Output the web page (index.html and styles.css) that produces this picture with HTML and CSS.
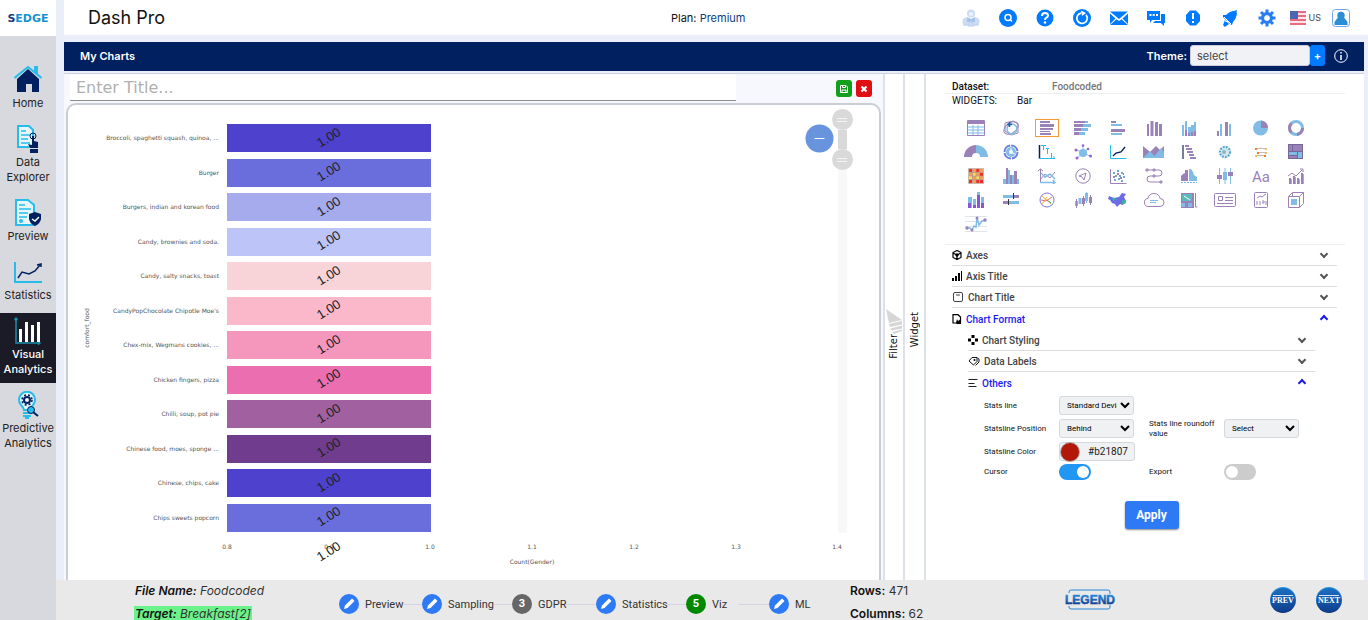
FILE: index.html
```html
<!DOCTYPE html>
<html lang="en">
<head>
<meta charset="utf-8">
<title>Dash Pro</title>
<link rel="stylesheet" href="styles.css">
</head>
<body>
<aside class="sidebar">
  <div class="logo"><span>S</span>EDGE</div>
  <nav class="nav">
    <a class="nav-item" href="#"><svg viewBox="0 0 28 28"><path d="M3 13h0L14 3l11 10v13h-7v-8h-6v8H3z" fill="#00205f"/><path d="M0.500 12 14 1l13.500 11" fill="none" stroke="#27bdea" stroke-width="2"/><path d="M20 0h4v9l-4-4z" fill="#27bdea"/></svg><span>Home</span></a>
    <a class="nav-item" href="#"><svg viewBox="0 0 28 28"><path d="M4 1h11l4 4v17H4z" fill="#e6f6fb" stroke="#27bdea" stroke-width="2"/><path d="M7 6h5M7 10h9M7 14h7M7 18h9" stroke="#27bdea" stroke-width="1.500"/><circle cx="19" cy="11" r="3" fill="none" stroke="#00205f"/><path d="M18 11h2v5l4 1v6h-8l-2-4 4 1zM16 24h8v4h-8z" fill="#00205f"/></svg><span>Data<br>Explorer</span></a>
    <a class="nav-item" href="#"><svg viewBox="0 0 28 28"><path d="M2 1h12l6 5v20H2z" fill="#e6f6fb" stroke="#27bdea" stroke-width="2"/><path d="M5 6h6M5 10h12M5 14h9M5 18h8" stroke="#27bdea" stroke-width="1.500"/><circle cx="7" cy="22" r="2" fill="#27bdea"/><path d="M21 13l6 2v5q-1 5-6 7-5-2-6-7v-5z" fill="#00205f"/><path d="M18 20l3 2 4-4" fill="none" stroke="#fff" stroke-width="1.500"/></svg><span>Preview</span></a>
    <a class="nav-item" href="#"><svg viewBox="0 0 28 28"><path d="M1 4v20h27" fill="none" stroke="#27bdea" stroke-width="2"/><path d="M4 20l4-6 7 2 6-3 5-6M23 7l4-1v3" fill="none" stroke="#00205f" stroke-width="1.500"/></svg><span>Statistics</span></a>
    <a class="nav-item active" href="#"><svg viewBox="0 0 28 28"><path d="M2 2v24h24M0.500 3L2 1l1.500 2M24 24.500l2 1.500-2 1.500" fill="none" stroke="#1c8fa8" stroke-width="1.500"/><path d="M5 12h3v13H5zM11 5h3v20h-3zM17 8h3v17h-3zM23 5h3v20h-3z" fill="#fff"/></svg><span>Visual<br>Analytics</span></a>
    <a class="nav-item" href="#"><svg viewBox="0 0 28 28"><path d="M10 19q0-2-3-5a8 8 0 1 1 12 0q-3 3-3 5z" fill="#e6f6fb" stroke="#27bdea" stroke-width="2"/><path d="M9 22h8M9 25h8M11 27h4" stroke="#27bdea" stroke-width="2"/><circle cx="13" cy="9" r="3" fill="none" stroke="#00205f" stroke-width="2"/><circle cx="13" cy="9" r="5" fill="none" stroke="#00205f" stroke-width="1.500" stroke-dasharray="2 2"/><circle cx="17" cy="19" r="3.500" fill="#27bdea" stroke="#00205f"/><path d="M19 21l5 4" stroke="#00205f" stroke-width="2"/></svg><span>Predictive<br>Analytics</span></a>
  </nav>
</aside>
<div class="page">
  <header class="topbar">
    <h1>Dash Pro</h1>
    <p class="plan">Plan: <span>Premium</span></p>
    <div class="tools">
      <button aria-label="Assistant"><svg viewBox="0 0 18 18" fill="#cbdcf3"><circle cx="9" cy="4.500" r="4"/><circle cx="4.500" cy="12.500" r="4"/><circle cx="13.500" cy="12.500" r="4"/><path d="M5 8l4 2 4-2v5H5z" fill="#a8c3ea"/><path d="M6 17l2-4h2l2 4zM1 16h5M12 16h5" stroke="#b9cfee"/><circle cx="9" cy="5" r="2" fill="#edf3fb"/></svg></button>
      <button aria-label="Search"><svg viewBox="0 0 18 18"><circle cx="9" cy="9" r="9" fill="#007bff"/><circle cx="9" cy="8.500" r="3" fill="none" stroke="#fff" stroke-width="1.500"/><path d="M11 10.500l2 2" stroke="#fff" stroke-width="1.500"/></svg></button>
      <button aria-label="Help"><svg viewBox="0 0 18 18"><circle cx="9" cy="9" r="8.500" fill="#007bff"/><path d="M6 7q0-3 3-3t3 2.500q0 1.500-1.500 2.200T9 11" fill="none" stroke="#fff" stroke-width="2"/><circle cx="9" cy="13.500" r="1.300" fill="#fff"/></svg></button>
      <button aria-label="Refresh"><svg viewBox="0 0 18 18"><circle cx="9" cy="9" r="9" fill="#007bff"/><path d="M8 4.100A5.200 5.200 0 1 0 13 5.800" fill="none" stroke="#fff" stroke-width="1.700"/><path d="M8 1.500l5 2.500-4 3z" fill="#fff"/></svg></button>
      <button aria-label="Mail"><svg viewBox="0 0 18 18"><path d="M0 2.500h18L9 10zM0 4.500l5.500 5L0 15zM18 4.500l-5.500 5L18 15zM6.500 10.300L9 12l2.500-1.700L18 16H0z" fill="#007bff"/></svg></button>
      <button aria-label="Messages"><svg viewBox="0 0 18 18"><path d="M0 2h13v9H5l-2 3v-3H0zM14 5h4v9h-1v3l-3-3H6l2-2h6z" fill="#007bff"/><path d="M2.500 6h2M5.700 6h2M9 6h2" stroke="#fff" stroke-width="2"/></svg></button>
      <button aria-label="Alerts"><svg viewBox="0 0 18 18"><path d="M6 1.500h6L16 6v6l-4 4.500H6L2 12V6z" fill="#007bff"/><path d="M9 4v6M9 12v2" stroke="#fff" stroke-width="2"/></svg></button>
      <button aria-label="Notifications"><svg viewBox="0 0 18 18"><path d="M16 1q-1 2 0 4-1 5-4 8l-1 3-2-1-7-7 0-2 3 0q4-4 8-4zM4 11l4 4-4 3-2-2z" fill="#007bff"/><path d="M3 8l7 7M4 12l4 1" stroke="#fff"/></svg></button>
      <button aria-label="Settings"><svg viewBox="0 0 18 18"><circle cx="9" cy="9" r="4.300" fill="none" stroke="#2a7df0" stroke-width="3.500"/><path d="M9 0.500v4M9 13.500v4M0.500 9h4M13.500 9h4M3 3l3 3M12 12l3 3M15 3l-3 3M6 12l-3 3" stroke="#2a7df0" stroke-width="3"/><circle cx="9" cy="9" r="2.700" fill="#fff"/></svg></button>
      <button class="lang" aria-label="Language"><svg viewBox="0 0 16 14"><path d="M0 0h16v14H0z" fill="#fbe4e8"/><path d="M0 1h16M0 5h16M0 9h16M0 13h16" stroke="#e86c80" stroke-width="2"/><path d="M0 0h8v8H0z" fill="#4d66b1"/></svg>US</button>
      <button aria-label="Account"><svg viewBox="0 0 18 18"><rect x="0.500" y="0.500" width="17" height="17" rx="3" fill="#fff" stroke="#6fa6ee"/><circle cx="9" cy="6.500" r="3.700" fill="#2b8dd6"/><path d="M2.500 16v-3l3-4h7l3 4v3z" fill="#2b8dd6"/></svg></button>
    </div>
  </header>
  <section class="titlebar">
    <h2>My Charts</h2>
    <div class="theme">
      <label for="theme">Theme:</label>
      <select id="theme"><option>select</option></select><button class="add">+</button>
      <svg class="info" viewBox="0 0 14 14"><circle cx="7" cy="7" r="6.300" fill="none" stroke="#fff"/><path d="M7 6v5M7 3v1.500" stroke="#fff" stroke-width="1.500"/></svg>
    </div>
  </section>
  <main class="work">
    <section class="board">
      <div class="board-head">
        <input class="title" type="text" placeholder="Enter Title..." aria-label="Chart title">
        <div class="acts">
          <button class="save" aria-label="Save"><svg viewBox="0 0 8 8"><path d="M0.500 0.500H6L7.500 2v5.500h-7z" fill="none" stroke="#fff"/><path d="M2.500 0.500v2h3v-2M2 7V5h4v2" fill="none" stroke="#fff"/></svg></button>
          <button class="close" aria-label="Close"><svg viewBox="0 0 8 8"><path d="M1.500 1.500l5 5M6.500 1.500l-5 5" stroke="#fff" stroke-width="2.200"/></svg></button>
        </div>
      </div>
      <div class="chart-card">
        <svg class="chart" viewBox="68 105 811 475" preserveAspectRatio="xMinYMin meet">
          <g class="bars">
            <rect x="227" y="124" width="204" height="28" fill="#4d41cd"/><rect x="227" y="159" width="204" height="28" fill="#6a6ddc"/><rect x="227" y="193" width="204" height="28" fill="#a6abee"/><rect x="227" y="228" width="204" height="28" fill="#bdc4f8"/><rect x="227" y="262" width="204" height="28" fill="#f8d3d8"/><rect x="227" y="297" width="204" height="28" fill="#fab8ca"/><rect x="227" y="331" width="204" height="28" fill="#f597bd"/><rect x="227" y="366" width="204" height="28" fill="#eb6eb1"/><rect x="227" y="400" width="204" height="28" fill="#a1609f"/><rect x="227" y="435" width="204" height="28" fill="#703c8d"/><rect x="227" y="469" width="204" height="28" fill="#4d41cd"/><rect x="227" y="504" width="204" height="28" fill="#6a6ddc"/>
          </g>
          <g class="cats">
            <text x="219" y="140">Broccoli, spaghetti squash, quinoa, ...</text><text x="219" y="175">Burger</text><text x="219" y="209">Burgers, indian and korean food</text><text x="219" y="244">Candy, brownies and soda.</text><text x="219" y="278">Candy, salty snacks, toast</text><text x="219" y="313">CandyPopChocolate Chipotle Moe's</text><text x="219" y="347">Chex-mix, Wegmans cookies, ...</text><text x="219" y="382">Chicken fingers, pizza</text><text x="219" y="416">Chilli, soup, pot pie</text><text x="219" y="451">Chinese food, moes, sponge ...</text><text x="219" y="485">Chinese, chips, cake</text><text x="219" y="520">Chips sweets popcorn</text>
          </g>
          <g class="ticks">
            <text x="227" y="549">0.8</text><text x="329" y="549">0.9</text><text x="430" y="549">1.0</text><text x="532" y="549">1.1</text><text x="634" y="549">1.2</text><text x="736" y="549">1.3</text><text x="837" y="549">1.4</text>
            <text x="532" y="564">Count(Gender)</text><text transform="translate(89 328) rotate(-90)">comfort_food</text>
          </g>
          <g class="vals">
            <text transform="translate(331 141) rotate(-32)">1.00</text><text transform="translate(331 175) rotate(-32)">1.00</text><text transform="translate(331 210) rotate(-32)">1.00</text><text transform="translate(331 244) rotate(-32)">1.00</text><text transform="translate(331 279) rotate(-32)">1.00</text><text transform="translate(331 313) rotate(-32)">1.00</text><text transform="translate(331 348) rotate(-32)">1.00</text><text transform="translate(331 382) rotate(-32)">1.00</text><text transform="translate(331 417) rotate(-32)">1.00</text><text transform="translate(331 451) rotate(-32)">1.00</text><text transform="translate(331 486) rotate(-32)">1.00</text><text transform="translate(331 520) rotate(-32)">1.00</text><text transform="translate(331 555) rotate(-32)">1.00</text>
          </g>
          <rect x="838" y="120" width="9" height="413" fill="#f8f8f8"/><rect x="838" y="130" width="9" height="19" fill="#d9d9d9"/>
          <circle cx="842.500" cy="119.500" r="10.500" fill="#d9d9d9"/><circle cx="842.500" cy="159.500" r="10.500" fill="#d9d9d9"/>
          <path d="M837 118.500h10M837 121.500h10M837 158.500h10M837 161.500h10" stroke="#f4f4f4"/>
          <circle cx="819.500" cy="138.500" r="14" fill="#6894de"/><path d="M814.500 138.500h10" stroke="#fff"/>
        </svg>
      </div>
    </section>
    <button class="strip filter"><svg viewBox="0 0 17 25" fill="#d6d6d6"><path d="M0 0l16 11-13 3zM3 15l13-3v3.500L4 18zM4 19.500l12-3v3L6 21.500zM6 23l10-2.500V22L8 25z"/></svg><span>Filter</span></button>
    <button class="strip"><span>Widget</span></button>
    <section class="panel">
      <div class="dataset"><span>Dataset:</span><b>Foodcoded</b></div>
      <div class="widgets-head"><span>WIDGETS:</span><span>Bar</span></div>
      <div class="widgets">
        <button aria-label="Table"><svg viewBox="0 0 24 16"><path class="sb" d="M4 7h16M4 10h16M4 13h16M9 5v10M14 5v10"/><path class="sp" d="M3.500 0.500h17v15h-17z"/><path class="p" d="M4 1h16v3H4z"/></svg></button>
        <button aria-label="Pivot"><svg viewBox="0 0 24 16"><path class="sp" d="M6 3l8-2 5 3v9l-7 2-6-4z"/><ellipse class="sp" cx="12" cy="8" rx="8" ry="5" transform="rotate(-35 12 8)"/><circle class="sb" cx="13" cy="9" r="5" stroke-width="1.500"/><path d="M8 4.500h5M10.500 2v5" stroke="#1b5fa8" stroke-width="1.500"/></svg></button>
        <button class="selected" aria-label="Bar"><svg viewBox="0 0 24 16"><path class="p" d="M5 1h10v2H5zM5 4h14v3H5zM5 8h13v2H5zM5 11h10v1H5zM5 13h11v2H5z"/></svg></button>
        <button aria-label="Stacked bar"><svg viewBox="0 0 24 16"><path class="b" d="M3 1h14v2H3zM3 4h17v3H3zM3 8h14v3H3zM3 12h11v3H3z"/><path class="p" d="M3 1h11v2H3zM3 4h9v3H3zM3 8h7v3H3zM3 12h5v3H3z"/></svg></button>
        <button aria-label="Grouped bar"><svg viewBox="0 0 24 16"><path class="b" d="M5 4h11v2H5zM5 13h11v2H5z"/><path class="p" d="M5 1h5v2H5zM5 9h14v3H5z"/></svg></button>
        <button aria-label="Column"><svg viewBox="0 0 24 16"><path class="p" d="M5 4h2v12H5zM8.500 1h3v15h-3zM13 2h3v14h-3zM17 4h3v12h-3z"/></svg></button>
        <button aria-label="Stacked column"><svg viewBox="0 0 24 16"><path class="b" d="M5 5h2v11H5zM8 1h2v15H8zM11 7h3v9h-3zM14 5h3v11h-3zM17 2h2v14h-2z"/><path class="p" d="M8 10h2v6H8zM11 13h2v3h-2zM14 12h2v4h-2zM17 11h2v5h-2z"/></svg></button>
        <button aria-label="Grouped column"><svg viewBox="0 0 24 16"><path class="p" d="M4 11h2v5H4zM12 2h3v14h-3z"/><path class="b" d="M7 4h2v12H7zM16 4h2v12h-2z"/></svg></button>
        <button aria-label="Pie"><svg viewBox="0 0 24 16"><circle class="b" cx="11.500" cy="8" r="7.500"/><path class="p" d="M12 8V0.500A7.500 7.500 0 0 1 19 8z"/></svg></button>
        <button aria-label="Donut"><svg viewBox="0 0 24 16"><circle cx="12" cy="8" r="6.500" fill="none" stroke="#80bce6" stroke-width="3"/><circle cx="12" cy="8" r="6.500" fill="none" stroke="#9a82b8" stroke-width="3" stroke-dasharray="9 6 10 16"/></svg></button>

        <button aria-label="Half donut"><svg viewBox="0 0 24 16"><path class="p" d="M0 13A12 12 0 0 1 12 1v8q-4 0-4 4z"/><path class="b" d="M24 13A12 12 0 0 0 12 1v8q4 0 4 4z"/></svg></button>
        <button aria-label="Sunburst"><svg viewBox="0 0 24 16"><circle cx="12" cy="8" r="6.500" fill="none" stroke="#6b7fe0" stroke-width="2" stroke-dasharray="9 1"/><circle class="sb" cx="12" cy="8" r="3.500" stroke-width="3"/><path d="M12 4v4l4 2" fill="none" stroke="#fff"/></svg></button>
        <button aria-label="Waterfall"><svg viewBox="0 0 24 16"><path d="M4.500 1v14" stroke="#00205f" stroke-width="1.500"/><path d="M4 14.500h16" stroke="#27bdea"/><path d="M6 1.500h5M8.500 2v4M11 4.500h3M12.500 5v5M16.500 9v5M18 13h2" stroke="#27bdea"/></svg></button>
        <button aria-label="Network"><svg viewBox="0 0 24 16"><path class="sb" d="M12 9L6 6M12 9V2M12 9l7 3M12 9l-6 5M12 9l5-4"/><circle class="b" cx="12" cy="9" r="4"/><g fill="#9a5fd0"><circle cx="5" cy="6" r="1.500"/><circle cx="12" cy="1.500" r="1.300"/><circle cx="19.500" cy="12" r="1.500"/><circle cx="6" cy="14" r="1.500"/><circle cx="17" cy="5" r="1.300"/></g></svg></button>
        <button aria-label="Line"><svg viewBox="0 0 24 16"><path d="M4.500 1v13.500h16" fill="none" stroke="#27bdea"/><path d="M7 12l3-3 5-1 4-5" fill="none" stroke="#00205f" stroke-width="1.300"/></svg></button>
        <button aria-label="Area"><svg viewBox="0 0 24 16"><path class="p" d="M1 2l7 6 6-6 4 4 4-4v12H1z"/><path class="b" d="M1 14l7-7 6 7zM11 14l8-10 3 4v6z"/></svg></button>
        <button aria-label="Gantt"><svg viewBox="0 0 24 16"><path d="M6 1v14" stroke="#718096" stroke-width="2"/><path class="p" d="M8 1h4v2H8zM9 4h6v2H9zM10 7h6v2h-6zM12 10h5v2h-5zM13 13h6v2h-6z"/></svg></button>
        <button aria-label="Bubble map"><svg viewBox="0 0 24 16"><circle cx="12" cy="8" r="6.500" fill="#d3e6ee"/><circle cx="12" cy="8" r="5" fill="none" stroke="#4a9fc4" stroke-width="2" stroke-dasharray="1.500 1.500"/><circle cx="11" cy="8" r="2" fill="#86b8c8"/></svg></button>
        <button aria-label="Dumbbell"><svg viewBox="0 0 24 16"><path d="M6 4.500h12M8 8.500h10M6 11.500h11" stroke="#c9bdb0"/><g fill="#f47b30"><path d="M6 4h2v2H6zM8 8h2v2H8zM15 11h2v2h-2z"/></g><path d="M16 4h2v2h-2zM16 8h2v2h-2zM6 11h2v2H6z" fill="#efc050"/></svg></button>
        <button aria-label="Treemap"><svg viewBox="0 0 24 16"><path class="p" d="M4 0h15v15H4z"/><path class="b" d="M4 7h9v4H4zM14 7h4v7h-4z"/><path d="M4.500 0.500h14v14h-14zM8.500 1v6M4 7.500h14M13.500 7v8M4 11.500h9" fill="none" stroke="#756797"/></svg></button>

        <button aria-label="Heatmap"><svg viewBox="0 0 24 16"><path d="M5 1h14v14H5z" fill="#f0a05c"/><path d="M5 1h3v3H5zM12 1h3v3h-3zM16 5h3v3h-3zM5 12h3v3H5zM12 12h3v3h-3zM16 12h3v3h-3z" fill="#ee2c2c"/><path d="M9 5h3v3H9zM5 8h3v3H5zM12 8h3v3h-3z" fill="#f8e060"/><path d="M4.500 0.500h15v15h-15zM8.500 1v14M12 1v14M15.500 1v14M5 4.500h14M5 8h14M5 11.500h14" fill="none" stroke="#b99a86" stroke-width="0.700"/></svg></button>
        <button aria-label="Histogram"><svg viewBox="0 0 24 16"><path class="b" d="M4 11h3v5H4zM9 2h2v14H9zM13 7h2v9h-2zM18 11h2v5h-2z"/><path class="p" d="M7 0h2v16H7zM11 7h2v9h-2zM15 3h3v13h-3z"/></svg></button>
        <button aria-label="Multi line"><svg viewBox="0 0 24 16"><path class="sp" d="M5.500 1v14M3 3l2.500-2L8 3M5 12l5-6 5 4 5-6"/><path class="sb" d="M6 5l4 4 5-3 5 5M5 14.500h15M18 12l2 2.500-2 1.500" stroke-width="1.500"/></svg></button>
        <button aria-label="Radar"><svg viewBox="0 0 24 16"><circle class="sp" cx="12" cy="8" r="7.200"/><path class="sp" d="M8 8l7-3-2 7-2-3z"/></svg></button>
        <button aria-label="Scatter"><svg viewBox="0 0 24 16"><path class="sp" d="M4.500 1v14.500h16"/><path d="M7 5h2M11 3h2M15 5h2M9 8h2M13 8h2M17 9h2M8 12h2M12 11h2M15 13h2" stroke="#6fa6dc" stroke-width="2"/><path d="M11 6h2M7 9h2M14 10h2M17 6h1" stroke="#9a82b8" stroke-width="2"/></svg></button>
        <button aria-label="Flow"><svg viewBox="0 0 24 16"><path class="sp" d="M4 2h13a3 3 0 0 1 0 6H8a3 3 0 0 0 0 6h12"/><path class="sp" d="M4 1h2v2H4zM11 1h2v2h-2zM11 7h2v2h-2zM18 13h2v2h-2z"/></svg></button>
        <button aria-label="Pyramid"><svg viewBox="0 0 24 16"><path class="p" d="M8 2h3v11H4V9l-0-1 2-2 2-1z"/><path class="b" d="M12 1h2l2 3 1 3 3 2v4h-8z"/><path class="sb" d="M4 14.500h16" stroke-dasharray="2 1"/></svg></button>
        <button aria-label="Box plot"><svg viewBox="0 0 24 16"><path class="sb" d="M6.500 0v16M12 0v16M17.500 0v16"/><path class="p" d="M4 7h5v4H4zM15 4h5v4h-5z"/><path class="b" d="M10 4h4v8h-4z"/></svg></button>
        <button aria-label="Text"><svg viewBox="0 0 24 16"><text x="12" y="14" class="aa">Aa</text></svg></button>
        <button aria-label="Combo"><svg viewBox="0 0 24 16"><path class="p" d="M5 10h2v6H5zM9 8h2v8H9zM13 10h2v6h-2zM17 5h2v11h-2z"/><path class="b" d="M7 11h1v5H7zM11 9h1v7h-1zM15 11h1v5h-1zM19 6h1v10h-1z"/><path class="sp" d="M4 8l4-3 4 3 6-6M16 1h3v3"/></svg></button>

        <button aria-label="Stacked histogram"><svg viewBox="0 0 24 16"><path class="b" d="M4 5h4v11H4zM9 7h3v9H9zM13 0h3v16h-3zM17 5h3v11h-3z"/><path d="M4 11h3v5H4zM9 13h3v3H9zM13 3h3v13h-3zM17 11h3v5h-3z" fill="#8458d8"/></svg></button>
        <button aria-label="Bullet"><svg viewBox="0 0 24 16"><path class="b" d="M4 3h11v3H4zM9 9h11v3H9z"/><path class="p" d="M14 3h6v3h-6zM4 9h5v3H4z"/><path d="M14.500 1v6M9.500 7v6" stroke="#333"/></svg></button>
        <button aria-label="Chord"><svg viewBox="0 0 24 16"><circle cx="12" cy="8" r="7" fill="none" stroke="#7f77dc"/><path d="M7 4l9 8M7 12l5-7" stroke="#f0b030"/><path d="M6 8l5 1 6-4" fill="none" stroke="#e57080"/><path d="M12 8l4 3" stroke="#38b065"/></svg></button>
        <button aria-label="Candlestick"><svg viewBox="0 0 24 16"><path class="b" d="M4 9h3v5H4zM7.500 6h3v6h-3zM14 1h3v8h-3z"/><path class="p" d="M11 6h3v6h-3zM18 5h3v6h-3z"/><path class="sp" d="M5.500 7v9M12.500 4v10M19.500 3v10"/><path class="sb" d="M15.500 0v11"/></svg></button>
        <button aria-label="Map"><svg viewBox="0 0 24 16"><path d="M3 4l5 2 5-1 3-4 4 1-2 3 2 4-3 4-3-1-3 3-2-3-3-1-2-3-2-1z" fill="#6e6be6"/><circle cx="8" cy="7" r="1.500" fill="#2fc08a"/><circle cx="18" cy="10" r="2" fill="#2fc08a"/></svg></button>
        <button aria-label="Word cloud"><svg viewBox="0 0 24 16"><path class="sp" d="M7 14.500a4 4 0 0 1-1-8 6 5 0 0 1 12 0 4 4 0 0 1 0 8z"/><path class="sb" d="M8 8.500h8M8 10.500h6"/></svg></button>
        <button aria-label="Geo map"><svg viewBox="0 0 24 16"><path class="p" d="M4 1h13v15H4z"/><path d="M5 2h10v7H5z" fill="#5fb8c0"/><path d="M7 4l6 4" stroke="#fff"/><path class="b" d="M4 11h4v4H4zM11 11h4v4h-4z"/><path class="sp" d="M18.500 1v14h2"/></svg></button>
        <button aria-label="Card"><svg viewBox="0 0 24 16"><rect class="sp" x="1.500" y="1.500" width="21" height="13" rx="1"/><path class="sp" d="M5.500 4.500h4v4h-4zM12 5.500h8M12 8.500h8M4 11.500h16"/></svg></button>
        <button aria-label="KPI"><svg viewBox="0 0 24 16"><rect class="sp" x="5.500" y="0.500" width="13" height="15" rx="1"/><path class="sp" d="M8 6l3-2 2 1 4-3M8 9v4M11 9v4M13 9h2v2h-2M17 9v4"/></svg></button>
        <button aria-label="3D"><svg viewBox="0 0 24 16"><path class="sp" d="M4.500 4.500h11v11h-11zM4.500 4.500l4-4h11v11l-4 4M15.500 4.500l4-4M8.500 1v4"/><path class="b" d="M7 7h6v6H7z"/></svg></button>

        <button aria-label="Sparkline"><svg viewBox="0 0 24 16"><path d="M1 0.500h22M1 5.500h22M1 10.500h22M1 15.500h22" stroke="#dfe3ea"/><path class="sb" d="M2 12h4l2 2 2-4 2 1 1-9 2 7 3-4 4-1" stroke-width="1.500"/><circle class="p" cx="3" cy="12" r="1.700"/><circle class="p" cx="8" cy="14" r="1.500"/><circle class="p" cx="13" cy="2" r="1.500"/><circle class="p" cx="21" cy="4" r="1.700"/></svg></button>
      </div>
      <div class="accordion">
        <button class="row"><svg viewBox="0 0 10 10"><path d="M5 0.500l4 2v5l-4 2-4-2v-5zM1 3l4 2 4-2M5 5v4" fill="none" stroke="#000" stroke-width="1.200"/><circle cx="5" cy="5" r="1.700"/></svg><span>Axes</span><i class="chev"></i></button>
        <button class="row"><svg viewBox="0 0 10 10"><path d="M0 7h2v3H0zM3 5h2v5H3zM6 2h2v8H6zM9 0h1v10H9z"/></svg><span>Axis Title</span><i class="chev"></i></button>
        <button class="row"><svg viewBox="0 0 12 10"><rect x="1.500" y="0.500" width="9" height="9" rx="1.500" fill="none" stroke="#444"/><path d="M4 3h4" stroke="#444"/></svg><span>Chart Title</span><i class="chev"></i></button>
        <button class="row open"><svg viewBox="0 0 10 10"><path d="M1 0.700h5L8.500 3v6H1z" fill="none" stroke="#000" stroke-width="1.200"/><path d="M4 9l1-4 1 2 3-2v5H5z"/></svg><span>Chart Format</span><i class="chev"></i></button>
        <div class="nested">
          <button class="row"><svg viewBox="0 0 10 10"><path d="M3.500 0h3v3h-3zM3.500 7h3v3h-3zM0 3.500h3v3H0zM7 3.500h3v3H7z"/></svg><span>Chart Styling</span><i class="chev"></i></button>
          <button class="row"><svg viewBox="0 0 12 10"><path d="M1 5l3-3.500h5v4L5.500 9zM9.500 2l1.500 1v3L7.500 9.500" fill="none" stroke="#111"/><circle cx="6.500" cy="4" r="1"/></svg><span>Data Labels</span><i class="chev"></i></button>
          <button class="row open"><svg viewBox="0 0 10 10"><path d="M0.500 1.500h9M0.500 5.500h6M0.500 8.500h8" stroke="#222"/></svg><span>Others</span><i class="chev"></i></button>
          <form class="form">
            <label for="sl">Stats line</label><select id="sl"><option>Standard Deviation</option></select><span></span><span></span>
            <label for="sp">Statsline Position</label><select id="sp"><option>Behind</option></select>
            <label for="sr">Stats line roundoff value</label><select id="sr"><option>Select</option></select>
            <label for="sc">Statsline Color</label><div class="colour"><input id="sc" type="color" value="#b21807"><input type="text" value="#b21807" aria-label="Color code"></div><span></span><span></span>
            <label for="cu">Cursor</label><input class="toggle" id="cu" type="checkbox" checked>
            <label for="ex">Export</label><input class="toggle" id="ex" type="checkbox">
          </form>
        </div>
        <button class="apply">Apply</button>
      </div>
    </section>
  </main>
  <footer class="footer">
    <div class="file"><p><b>File Name:</b> Foodcoded</p><p><mark><b>Target:</b> Breakfast[2]</mark></p></div>
    <ol class="steps">
      <li><svg viewBox="0 0 20 20"><circle cx="10" cy="10" r="10"/><path d="M5 15l1-3.500 7-7 2.500 2.500-7 7z" fill="#fff"/></svg>Preview</li>
      <li><svg viewBox="0 0 20 20"><circle cx="10" cy="10" r="10"/><path d="M5 15l1-3.500 7-7 2.500 2.500-7 7z" fill="#fff"/></svg>Sampling</li>
      <li><span class="num">3</span>GDPR</li>
      <li><svg viewBox="0 0 20 20"><circle cx="10" cy="10" r="10"/><path d="M5 15l1-3.500 7-7 2.500 2.500-7 7z" fill="#fff"/></svg>Statistics</li>
      <li class="now"><span class="num">5</span>Viz</li>
      <li><svg viewBox="0 0 20 20"><circle cx="10" cy="10" r="10"/><path d="M5 15l1-3.500 7-7 2.500 2.500-7 7z" fill="#fff"/></svg>ML</li>
    </ol>
    <div class="counts"><p><b>Rows:</b> 471</p><p><b>Columns:</b> 62</p></div>
    <button class="legend" aria-label="Legend"><svg viewBox="0 0 54 22"><defs><linearGradient id="lg" x1="0" y1="0" x2="0" y2="1"><stop offset="0" stop-color="#2a98ea"/><stop offset="1" stop-color="#0c2e7c"/></linearGradient></defs><path d="M6 4V3q0-2 2-2h37q2 0 2 2v2M6 17v1q0 2 2 2h37q2 0 2-2v-2" fill="none" stroke="#2686d8"/><text x="27" y="15" fill="url(#lg)" stroke="url(#lg)">LEGEND</text></svg></button>
    <div class="pager">
      <button><svg viewBox="0 0 26 26"><circle cx="13" cy="13" r="13" fill="url(#lg)"/><circle cx="13" cy="13" r="12" fill="#104c9c" opacity="0.500"/><path d="M3 8.500h20" stroke="#cfe4fa"/><text x="13" y="16">PREV</text></svg></button>
      <button><svg viewBox="0 0 26 26"><circle cx="13" cy="13" r="13" fill="url(#lg)"/><circle cx="13" cy="13" r="12" fill="#104c9c" opacity="0.500"/><path d="M3 8.500h20" stroke="#cfe4fa"/><text x="13" y="16">NEXT</text></svg></button>
    </div>
  </footer>
</div>
</body>
</html>
```
FILE: styles.css
```css
* { box-sizing: border-box; }
body { margin: 0; height: 100vh; display: flex; overflow: hidden; background: #eaeef8; color: #111; font-family: Inter, "Liberation Sans", sans-serif; font-size: 11px; }
h1, h2, p, ol { margin: 0; padding: 0; font-weight: 400; }
button { border: 0; padding: 0; background: none; font: inherit; color: inherit; cursor: pointer; }
svg { display: block; }
b { font-weight: 600; }

.sidebar { width: 56px; flex: none; background: #d8d9de; }
.logo { height: 36px; background: #fff; display: flex; align-items: center; justify-content: center; font: 700 11px "DejaVu Sans", sans-serif; color: #1592cf; }
.logo span { color: #0b3d80; }
.nav { padding-top: 26px; display: flex; flex-direction: column; gap: 4px; }
.nav-item { padding: 4px 0 6px; display: flex; flex-direction: column; align-items: center; gap: 2px; line-height: 15px; text-align: center; text-decoration: none; color: #222; }
.nav-item svg { width: 28px; height: 28px; }
.nav-item.active { background: #1b1b27; color: #fff; font-weight: 500; }

.page { flex: 1; min-width: 0; display: flex; flex-direction: column; }
.topbar { height: 35px; flex: none; margin-left: 8px; padding: 0 18px 0 24px; background: #fff; display: grid; grid-template-columns: 583px auto 1fr; align-items: center; }
.topbar h1 { font-size: 18px; }
.plan span { color: #0b3d80; }
.tools { display: flex; align-items: center; justify-content: flex-end; gap: 19px; }
.tools svg { width: 18px; height: 18px; }
.tools .lang { display: flex; align-items: center; gap: 3px; margin: 0 -8px 0 -5px; font-size: 9px; color: #444; }
.tools .lang svg { width: 16px; height: 14px; }

.titlebar { height: 29px; flex: none; margin: 7px 4px 2px 8px; padding: 0 16px 2px; background: #00205f; color: #fff; display: flex; align-items: center; justify-content: space-between; }
.titlebar h2 { font-size: 11px; font-weight: 600; }
.theme { display: flex; align-items: center; font-weight: 600; }
.theme select { width: 120px; height: 21px; margin-left: 3px; padding: 0 6px; appearance: none; border: 1px solid #ccd; border-radius: 3px; background: #f1f2f5; font: 11px Inter, sans-serif; color: #444; }
.add { width: 15px; height: 21px; background: #007bff; border-radius: 3px; }
.info { width: 14px; height: 14px; margin-left: 9px; }

.work { flex: 1; min-height: 0; margin: 0 4px 0 8px; display: grid; grid-template-columns: minmax(0, 1fr) 20px 21px 440px; background: #fff; border-top: 1px solid #cfd0e0; }
.board { display: flex; flex-direction: column; padding: 1px 2px 0; min-height: 0; background: #f6f8fe; }
.board-head { height: 27px; flex: none; display: flex; justify-content: space-between; padding: 0 9px 0 4px; }
.title { width: 83%; height: 26px; padding: 0 6px; border: 0; border-bottom: 1px solid #8d8d8d; background: #fff; font: 16px "DejaVu Sans", sans-serif; }
.title::placeholder { color: #b0b0b0; }
.acts { display: flex; gap: 4px; padding-top: 5px; }
.acts button { width: 16px; height: 17px; display: grid; place-items: center; border-radius: 3px; }
.acts svg { width: 8px; height: 8px; }
.save { background: #12a01c; }
.close { background: #e00d12; }
.chart-card { flex: 1; min-height: 0; margin-top: 1px; overflow: hidden; background: #fff; border: 2px solid #c9cdd4; border-bottom: 0; border-radius: 10px 10px 0 0; }
.chart { width: 100%; font-family: "DejaVu Sans", sans-serif; font-size: 6px; fill: #555; }
.cats { text-anchor: end; }
.ticks { text-anchor: middle; }
.vals { text-anchor: middle; font-family: "Liberation Sans", sans-serif; font-size: 13px; fill: #222; }

.strip { display: flex; flex-direction: column; align-items: center; justify-content: center; padding-top: 6px; border-left: 2px solid #dde1ea; background: #fff; font: 10px "DejaVu Sans", sans-serif; }
.filter { padding-top: 14px; }
.strip svg { width: 17px; height: 25px; }
.strip span { writing-mode: vertical-rl; transform: rotate(180deg); line-height: 12px; }

.panel { padding: 6px 19px 0; border-left: 2px solid #dde1ea; font-family: Roboto, sans-serif; font-size: 10px; }
.dataset { display: flex; height: 14px; padding-left: 7px; line-height: 14px; border-bottom: 1px solid #eceef0; font-weight: 500; }
.dataset span { width: 100px; }
.dataset b { font-weight: 500; color: #777; }
.widgets-head { display: flex; gap: 20px; padding-left: 7px; line-height: 14px; }
.widgets { display: grid; grid-template-columns: repeat(10, 1fr); grid-auto-rows: 24px; padding: 8px 31px 8px 13px; border-bottom: 1px solid #eceef0; }
.widgets button { display: grid; place-items: center; align-self: center; justify-self: center; width: 24px; height: 18px; }
.widgets svg { width: 24px; height: 16px; }
.widgets .selected { outline: 1px solid #f79a35; outline-offset: -1px; }
.p { fill: #9a82b8; }
.b { fill: #80bce6; }
.sp { fill: none; stroke: #9a82b8; }
.sb { fill: none; stroke: #80bce6; }
.aa { font: 15px Roboto, sans-serif; fill: #9a82b8; text-anchor: middle; }
.widgets svg:has(.aa) { overflow: visible; }

.accordion { display: flex; flex-direction: column; padding: 0 8px 0 7px; }
.row { height: 21px; display: flex; align-items: center; gap: 4px; border-bottom: 1px solid #dedede; font-weight: 500; color: #444; }
.row svg { height: 10px; flex: none; }
.row span { flex: 1; text-align: left; }
.row.open { height: 22px; border: 0; color: #1b1bf0; }
.chev { width: 6px; height: 6px; margin: 0 10px 2px 0; border: solid #555; border-width: 0 2px 2px 0; transform: rotate(45deg); }
.open .chev { margin-bottom: 0; border-color: #1b1bf0; transform: rotate(225deg); }
.nested { display: flex; flex-direction: column; padding: 0 22px 0 16px; }
.form { display: grid; grid-template-columns: 75px 90px 75px 75px; grid-template-rows: 23px 23px 23px 18px; align-items: center; padding-left: 16px; font-size: 8px; line-height: 10px; }
.form select { width: 75px; height: 19px; padding: 0 0 0 3px; border: 1px solid #d5d8dc; border-radius: 3px; background: #f0f1f3; font: 8px Roboto, sans-serif; color: #000; }
.colour { width: 76px; height: 19px; display: flex; align-items: center; border: 1px solid #d5d8dc; border-radius: 3px; background: #f0f1f3; }
.colour input { border: 0; padding: 0; background: none; }
.colour [type=color] { width: 20px; height: 20px; flex: none; appearance: none; }
.colour [type=color]::-webkit-color-swatch-wrapper { padding: 0; }
.colour [type=color]::-webkit-color-swatch { border: 1px solid #aaa; border-radius: 50%; }
.colour [type=text] { width: 54px; padding-left: 8px; font: 10px Roboto, sans-serif; color: #222; }
.toggle { appearance: none; width: 32px; height: 16px; margin: 0; padding: 2px; display: flex; border-radius: 8px; background: #ccc; }
.toggle::before { content: ""; width: 12px; height: 12px; border-radius: 50%; background: #fff; }
.toggle:checked { background: #2196f3; justify-content: flex-end; }
.apply { align-self: center; width: 54px; height: 28px; margin: 20px 0 0 14px; border-radius: 3px; background: #2e7af5; color: #fff; font-size: 12px; font-weight: 700; box-shadow: 0 1px 2px #888; }

.footer { height: 40px; flex: none; display: flex; align-items: center; padding: 0 26px 0 79px; background: #e9e9e9; color: #333; }
.footer b { color: #111; }
.footer p { line-height: 23px; white-space: nowrap; }
.file, .counts { padding-top: 3px; }
.file { width: 204px; font-size: 12px; font-style: italic; }
.file mark { margin-left: -1px; padding: 0 1px; background: #6bf28a; color: inherit; }
.steps { width: 511px; display: grid; grid-template-columns: 83px 90px 84px 90px 83px auto; list-style: none; padding-top: 8px; font-family: Roboto, sans-serif; }
.steps li { display: flex; align-items: center; gap: 6px; }
.steps li:not(:last-child)::after { content: ""; flex: 1; height: 1px; margin-left: -6px; background: #d3d3e3; }
.steps li.now::after { margin-left: 6px; }
.steps svg, .num { width: 20px; height: 20px; flex: none; }
.steps svg { fill: #2e7af5; }
.num { border-radius: 50%; background: #666; color: #fff; text-align: center; font-weight: 700; line-height: 20px; }
.now .num { background: #080; }
.counts { width: 213px; font-size: 12px; }
.legend svg { width: 54px; height: 22px; }
.legend text { font: 700 12px "Liberation Sans", sans-serif; text-anchor: middle; stroke-width: 0.5; }
.pager { display: flex; gap: 20px; margin-left: auto; }
.pager svg { width: 26px; height: 26px; }
.pager text { font: 700 8px "Liberation Serif", serif; fill: #fff; text-anchor: middle; }
```
